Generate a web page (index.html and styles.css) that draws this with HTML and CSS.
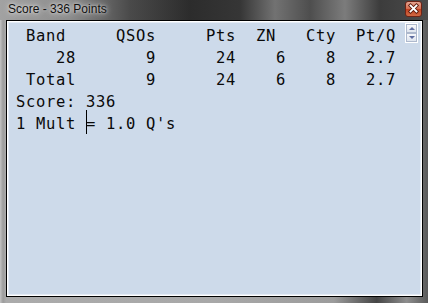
FILE: index.html
```html
<!DOCTYPE html>
<html lang="en">
<head>
    <meta charset="UTF-8">
    <title>Score - 336 Points</title>
    <link rel="stylesheet" href="styles.css">
</head>
<body>

    <div class="window">
        <!-- Glass title bar -->
        <div class="titlebar">
            <span class="title">Score - 336 Points</span>
            <span class="close">
                <svg width="17" height="16" viewBox="0 0 17 16">
                    <path d="M5.5 4.5 L11.5 10.5 M11.5 4.5 L5.5 10.5" stroke="#5a1a0c" stroke-width="3.6" stroke-linecap="square"/>
                    <path d="M5.5 4.5 L11.5 10.5 M11.5 4.5 L5.5 10.5" stroke="#fff" stroke-width="1.8" stroke-linecap="square"/>
                </svg>
            </span>
        </div>

        <!-- Score list -->
        <div class="client">
            <div class="edge">
                <div class="list">
<pre class="score"> Band     QSOs     Pts  ZN   Cty  Pt/Q
    28       9      24    6    8   2.7
 Total       9      24    6    8   2.7
Score: 336
1 Mult = 1.0 Q's</pre>
                    <!-- text cursor resting before the "=" -->
                    <div class="caret"></div>
                    <div class="spin">
                        <span class="btn"><i class="up"></i></span>
                        <span class="btn"><i class="down"></i></span>
                    </div>
                </div>
            </div>
        </div>
    </div>

</body>
</html>
```

FILE: styles.css
```css
body {
    margin: 0;
    font-family: "Liberation Sans", Arial, sans-serif;
}
.window {
    width: 428px;
    height: 303px;
    display: flex;
    flex-direction: column;
    box-sizing: border-box;
    background: linear-gradient(to right, #c4c4c4 0, #9c9c9c 3px, #ababab 6px, #a8a8a8 50%, #9c9c9c 78%, #454545 88%, #8e8e8e 95%, #5a5a5a 100%);
}
.titlebar {
    height: 20px;
    display: flex;
    justify-content: space-between;
    align-items: flex-start;
    padding-left: 8px;
    background: linear-gradient(to right, #a2a2a2 0, #8c8c8c 70px, #4a4a4a 130px, #2c2c2c 190px, #363636 240px, #727272 275px, #4e4e4e 310px, #7c7c7c 345px, #3c3c3c 380px, #4c4c4c 428px);
}
.title {
    padding-top: 2px;
    font-size: 12px;
    line-height: 14px;
    color: #111;
    text-shadow: 0 0 6px rgba(255, 255, 255, 0.9), 0 0 3px rgba(255, 255, 255, 0.6);
}
.close {
    width: 17px;
    height: 16px;
    margin: 1px 6px 0 0;
    box-sizing: border-box;
    border: 1px solid #6e2416;
    border-radius: 3px;
    background: linear-gradient(#e6a591, #d46a4c 50%, #c2401f 51%, #cf6a45);
    display: flex;
    align-items: center;
    justify-content: center;
}
.close svg {
    margin: -1px;
}
.client {
    flex: 1;
    margin: 0 5px 6px 6px;
    border: 1px solid #000;
    display: flex;
}
.edge {
    flex: 1;
    border: 1px solid #fff;
    display: flex;
}
.list {
    flex: 1;
    position: relative;
    background: #cddaea;
    border: 1px solid #e4ebf5;
}
.score {
    margin: 0;
    padding: 2px 0 0 7px;
    font-family: "DejaVu Sans Mono", monospace;
    font-size: 15.5px;
    line-height: 22px;
    letter-spacing: 0.67px;
    color: #0a0a0a;
}
.caret {
    position: absolute;
    left: 77px;
    top: 87px;
    width: 1px;
    height: 24px;
    background: #000;
}
.spin {
    position: absolute;
    top: 0;
    right: 2px;
    width: 13px;
    height: 20px;
    display: flex;
    flex-direction: column;
    box-sizing: border-box;
    border: 1px solid #fff;
    background: #eef1f6;
}
.btn {
    flex: 1;
    display: flex;
    align-items: center;
    justify-content: center;
    border: 1px solid #aeb9cd;
    background: linear-gradient(#f7f8fb, #dfe5ee);
}
.up {
    border-left: 3px solid transparent;
    border-right: 3px solid transparent;
    border-bottom: 3px solid #5f6da0;
}
.down {
    border-left: 3px solid transparent;
    border-right: 3px solid transparent;
    border-top: 3px solid #5f6da0;
}
```
